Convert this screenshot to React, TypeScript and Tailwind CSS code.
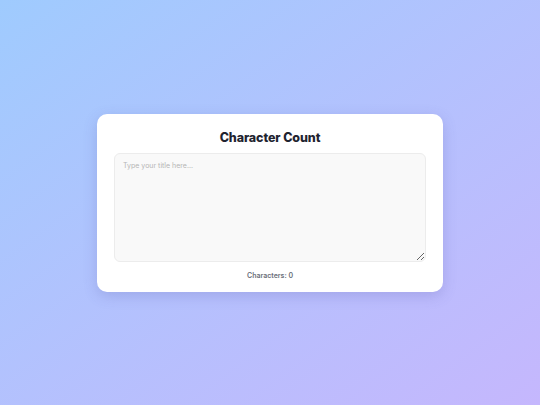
import { useState } from "react";

export default function App() {
  const [text, setText] = useState("");

  return (
    <main
      className="min-h-screen w-full flex items-center justify-center bg-gradient-to-br from-[#9fcbfe] to-[#c5b7fd]"
      style={{ fontFamily: '"Inter", "Noto Sans", sans-serif' }}
    >
      <div className="w-[346px] rounded-[10px] bg-white px-[17px] pt-[15px] pb-[10px] shadow-[0_4px_14px_rgba(80,80,160,0.22)]">
        <h1 className="text-center text-[12.5px] font-extrabold leading-[18px] text-[#1f2430] tracking-[-0.1px]">
          Character Count
        </h1>
        <textarea
          value={text}
          onChange={(e) => setText(e.target.value)}
          placeholder="Type your title here..."
          className="mt-[6px] block h-[109px] w-full rounded-[6px] border border-[#ececec] bg-[#f9f9f9] px-[8px] py-[7px] text-[7px] text-[#333] outline-none placeholder:text-[#b5b5b5]"
        />
        <p className="mt-[8px] text-center text-[7px] font-semibold leading-[12px] text-[#6b6f7a]">
          Characters: {text.length}
        </p>
      </div>
    </main>
  );
}
